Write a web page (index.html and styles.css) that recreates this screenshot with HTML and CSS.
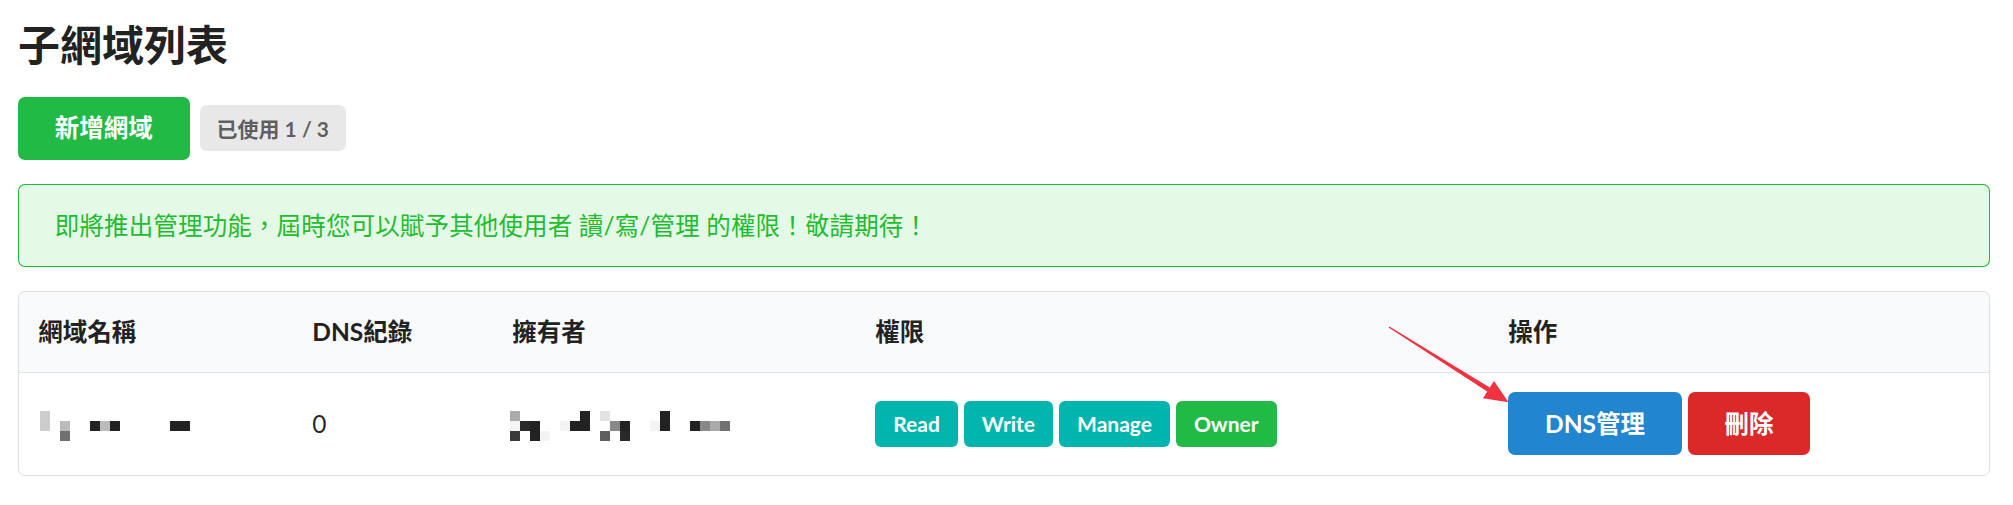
FILE: index.html
```html
<!DOCTYPE html>
<html lang="zh-Hant">
<head>
<meta charset="utf-8">
<title>子網域列表</title>
<link rel="stylesheet" href="styles.css">
</head>
<body>
<main class="page">
  <h1 class="title">子網域列表</h1>
  <div class="toolbar">
    <button class="btn btn-green">新增網域</button>
    <span class="label-gray">已使用 1 / 3</span>
  </div>
  <div class="message">即將推出管理功能，屆時您可以賦予其他使用者 讀/寫/管理 的權限！敬請期待！</div>
  <table class="grid-table">
    <colgroup>
      <col class="col-name">
      <col class="col-dns">
      <col class="col-owner">
      <col class="col-perm">
      <col class="col-act">
    </colgroup>
    <thead>
      <tr>
        <th>網域名稱</th>
        <th>DNS紀錄</th>
        <th>擁有者</th>
        <th>權限</th>
        <th>操作</th>
      </tr>
    </thead>
    <tbody>
      <tr>
        <td>
          <div class="pix pix-domain">
            <i class="kc"></i><i></i><i></i><i></i><i></i><i></i><i></i><i></i><i></i><i></i><i></i><i></i><i></i><i></i><i></i>
            <i class="kc"></i><i></i><i class="kb"></i><i></i><i></i><i class="k1"></i><i class="kb"></i><i class="k1"></i><i></i><i></i><i></i><i></i><i></i><i class="k1"></i><i class="k1"></i>
            <i></i><i></i><i class="k7"></i><i></i><i></i><i></i><i></i><i></i><i></i><i></i><i></i><i></i><i></i><i></i><i></i>
          </div>
        </td>
        <td>0</td>
        <td>
          <div class="pix pix-owner">
            <i class="ka"></i><i></i><i></i><i></i><i></i><i></i><i></i><i class="k1"></i><i></i><i class="ke"></i><i></i><i></i><i></i><i></i><i></i><i class="k1"></i><i></i><i></i><i></i><i></i><i></i><i></i>
            <i class="kf"></i><i class="k2"></i><i class="k1"></i><i></i><i></i><i class="kf"></i><i class="k1"></i><i class="k1"></i><i></i><i></i><i class="k8"></i><i class="k1"></i><i></i><i></i><i class="kf"></i><i class="k1"></i><i></i><i></i><i class="k1"></i><i class="k8"></i><i class="ka"></i><i class="k7"></i>
            <i class="k3"></i><i></i><i class="k1"></i><i class="kf"></i><i></i><i></i><i></i><i></i><i></i><i class="k5"></i><i></i><i class="k2"></i><i></i><i></i><i></i><i></i><i></i><i></i><i></i><i></i><i></i><i></i>
          </div>
        </td>
        <td>
          <div class="tags">
            <span class="tag tag-teal">Read</span>
            <span class="tag tag-teal">Write</span>
            <span class="tag tag-teal">Manage</span>
            <span class="tag tag-green">Owner</span>
          </div>
        </td>
        <td>
          <div class="actions">
            <button class="btn btn-blue">DNS管理</button>
            <button class="btn btn-red">刪除</button>
          </div>
        </td>
      </tr>
    </tbody>
  </table>
</main>
<svg class="annotation" width="2013" height="505" viewBox="0 0 2013 505" aria-hidden="true">
  <polygon class="arrow" points="1389.4,326.4 1489.8,387.4 1494,381 1508.5,402.3 1483,398.3 1487.2,391.6 1388.6,327.6"/>
</svg>
</body>
</html>
```

FILE: styles.css
```css
* { box-sizing: border-box; }

html, body {
  margin: 0;
  background: #fff;
}

body {
  position: relative;
  font-family: Lato, "Noto Sans CJK TC", sans-serif;
  font-size: 24.5px;
  line-height: 35px;
  color: rgba(0, 0, 0, 0.87);
}

.page {
  padding: 18px 23px 0 18px;
}

.title {
  margin: 0 0 24.5px;
  font-size: 42px;
  line-height: 54px;
  font-weight: 700;
  color: #222;
}

.toolbar {
  display: flex;
  align-items: center;
  gap: 10px;
}

.btn {
  font-family: inherit;
  font-size: 24.5px;
  font-weight: 700;
  line-height: 1;
  border: 0;
  border-radius: 7px;
  padding: 19.25px 36.75px;
  color: #fff;
  cursor: pointer;
}

.btn-green { background: #21BA45; }
.btn-blue { background: #2185D0; }
.btn-red { background: #DB2828; }

.label-gray {
  display: inline-block;
  font-size: 21px;
  line-height: 1;
  font-weight: 700;
  padding: 12.25px 17px;
  border-radius: 7px;
  background: #E8E8E8;
  color: rgba(0, 0, 0, 0.6);
}

.message {
  margin: 24px 0;
  padding: 24px 36.75px;
  background: #E5F9E7;
  color: #1EBC30;
  box-shadow: inset 0 0 0 1px #1EBC30;
  border-radius: 7px;
  line-height: 35px;
  letter-spacing: 0.15px;
}

.grid-table {
  width: 100%;
  table-layout: fixed;
  border-collapse: separate;
  border-spacing: 0;
  border: 1px solid rgba(34, 36, 38, 0.15);
  border-radius: 7px;
}

.col-name { width: 274px; }
.col-dns { width: 200px; }
.col-owner { width: 363px; }
.col-perm { width: 633px; }

.grid-table th {
  background: #F9FAFB;
  text-align: left;
  font-weight: 700;
  padding: 22.75px 19.25px;
  border-bottom: 1px solid rgba(34, 36, 38, 0.1);
  color: #222;
}

.grid-table th:first-child { border-top-left-radius: 7px; }
.grid-table th:last-child { border-top-right-radius: 7px; }

.grid-table td {
  padding: 19.25px;
  vertical-align: middle;
  text-align: left;
}

.pix {
  display: grid;
  grid-auto-rows: 10px;
  margin-top: 4px;
}

.pix-domain {
  grid-template-columns: repeat(15, 10px);
  margin-left: 2px;
}

.pix-owner {
  grid-template-columns: repeat(22, 10px);
  margin-left: -2px;
}

.pix i { display: block; }
.pix .k1 { background: #222; }
.pix .k2 { background: #2a2a2a; }
.pix .k3 { background: #3a3a3a; }
.pix .k5 { background: #5e5e5e; }
.pix .k7 { background: #707070; }
.pix .k8 { background: #888; }
.pix .ka { background: #aaa; }
.pix .kb { background: #bbb; }
.pix .kc { background: #ccc; }
.pix .ke { background: #e3e3e3; }
.pix .kf { background: #f3f3f3; }

.tags {
  display: flex;
  gap: 6px;
}

.tag {
  display: inline-block;
  font-size: 21px;
  line-height: 1;
  font-weight: 700;
  padding: 12.25px 18px;
  border-radius: 6px;
  color: #fff;
}

.tag-teal { background: #00B5AD; }
.tag-green { background: #21BA45; }

.actions {
  display: flex;
  gap: 6px;
}

.annotation {
  position: absolute;
  top: 0;
  left: 0;
  pointer-events: none;
}

.arrow {
  fill: #EF3340;
}
```
